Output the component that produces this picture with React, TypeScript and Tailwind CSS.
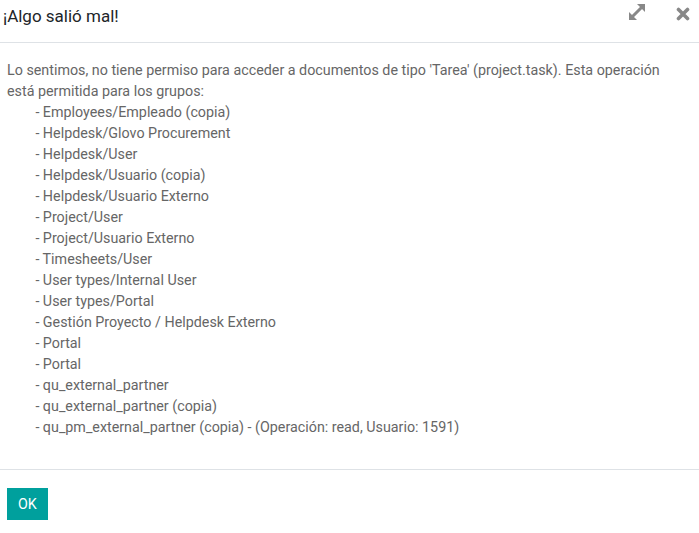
import React from "react";

const groups = [
  "Employees/Empleado (copia)",
  "Helpdesk/Glovo Procurement",
  "Helpdesk/User",
  "Helpdesk/Usuario (copia)",
  "Helpdesk/Usuario Externo",
  "Project/User",
  "Project/Usuario Externo",
  "Timesheets/User",
  "User types/Internal User",
  "User types/Portal",
  "Gestión Proyecto / Helpdesk Externo",
  "Portal",
  "Portal",
  "qu_external_partner",
  "qu_external_partner (copia)",
  "qu_pm_external_partner (copia) - (Operación: read, Usuario: 1591)",
];

export default function App() {
  return (
    <div
      className="w-[699px] h-[533px] bg-white flex flex-col overflow-hidden"
      style={{ fontFamily: "Roboto, 'Noto Sans', sans-serif" }}
    >
      <div className="h-[43px] flex items-start border-b border-[#dee2e6] shrink-0">
        <div className="pl-[3px] pt-[4px] text-[17px] leading-[24px] text-[#212529] flex-1">
          ¡Algo salió mal!
        </div>
        <div className="flex items-start pt-[3px]">
          <svg width="18" height="18" viewBox="0 0 18 18" className="mr-[30px]" fill="#888">
            <path d="M4 14 L14 4" stroke="#888" strokeWidth="3" />
            <polygon points="9,1 17,1 17,9" />
            <polygon points="1,9 1,17 9,17" />
          </svg>
          <svg width="14" height="14" viewBox="0 0 14 14" className="mt-[4px] mr-[9px]">
            <path d="M2.5 2.5 L11.5 11.5 M11.5 2.5 L2.5 11.5" stroke="#888" strokeWidth="3.6" strokeLinecap="round" />
          </svg>
        </div>
      </div>
      <div className="pl-[7px] pr-[16px] pt-[17px] pb-[31px] text-[14.3px] leading-[21px] text-[#666666] whitespace-pre-wrap border-b border-[#dee2e6]">
        {"Lo sentimos, no tiene permiso para acceder a documentos de tipo 'Tarea' (project.task). Esta operación está permitida para los grupos:"}
        {groups.map((g, i) => (
          <div key={i}>{"        - " + g}</div>
        ))}
      </div>
      <div className="pl-[7px] pt-[18px]">
        <button className="h-[32px] px-[11px] bg-[#00A09D] text-white text-[14.3px] leading-[32px]">
          OK
        </button>
      </div>
    </div>
  );
}
